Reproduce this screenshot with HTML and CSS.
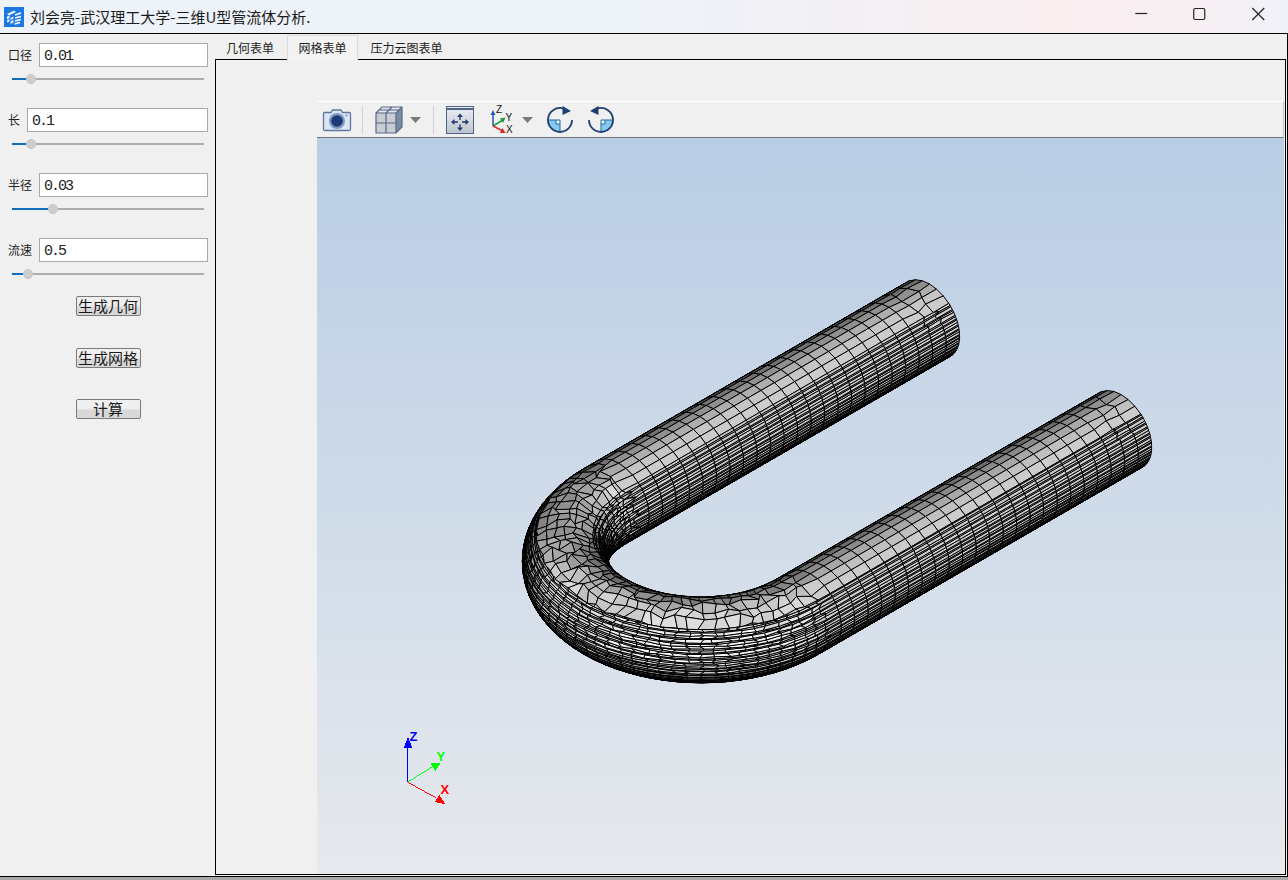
FILE: index.html
```html
<!DOCTYPE html>
<html lang="zh-CN">
<head>
<meta charset="utf-8">
<title>刘会亮-武汉理工大学-三维U型管流体分析.</title>
<link rel="stylesheet" href="styles.css">
</head>
<body>
<header class="titlebar">
  <svg class="app-icon" viewBox="0 0 20 20" aria-hidden="true">
    <rect width="20" height="20" fill="#1a78e0"/>
    <path d="M3 7L10 3.500L12 5L5 8.500Z M3 9.500L5.500 8.500V11L3 12.500Z M3 13.500L5.500 12V14.500L3 15.500Z M6.500 11L9.500 9.500V11.500L6.500 13Z M6.500 14.500L9.500 13V15.500L6.500 17Z" fill="#e8f3ff"/>
    <path d="M11 8L17 6M11 11L17 9.500M11 14L17 12.500M10.500 17L16 15.500" stroke="#fff" stroke-width="1.500"/>
  </svg>
  <div class="app-title">刘会亮-武汉理工大学-三维U型管流体分析.</div>
  <div class="win-controls">
    <svg class="win-btn" viewBox="0 0 58 33" aria-hidden="true"><path d="M23 13.500H35" class="win-glyph"/></svg>
    <svg class="win-btn" viewBox="0 0 58 33" aria-hidden="true"><rect x="23.500" y="8.500" width="11" height="11" rx="1.500" class="win-glyph"/></svg>
    <svg class="win-btn" viewBox="0 0 58 33" aria-hidden="true"><path d="M23 8L35 20M35 8L23 20" class="win-glyph"/></svg>
  </div>
</header>

<main class="workspace">
  <aside class="sidebar">
    <section class="field">
      <div class="field-row"><span class="field-label">口径</span><div class="text-input">0.01</div></div>
      <div class="slider"><i class="slider-fill" style="width:14px"></i><i class="slider-thumb"></i><i class="slider-track"></i></div>
    </section>
    <section class="field">
      <div class="field-row"><span class="field-label">长</span><div class="text-input">0.1</div></div>
      <div class="slider"><i class="slider-fill" style="width:14px"></i><i class="slider-thumb"></i><i class="slider-track"></i></div>
    </section>
    <section class="field">
      <div class="field-row"><span class="field-label">半径</span><div class="text-input">0.03</div></div>
      <div class="slider"><i class="slider-fill" style="width:36px"></i><i class="slider-thumb"></i><i class="slider-track"></i></div>
    </section>
    <section class="field">
      <div class="field-row"><span class="field-label">流速</span><div class="text-input">0.5</div></div>
      <div class="slider"><i class="slider-fill" style="width:11px"></i><i class="slider-thumb"></i><i class="slider-track"></i></div>
    </section>
    <div class="actions">
      <button class="action">生成几何</button>
      <button class="action">生成网格</button>
      <button class="action">计算</button>
    </div>
  </aside>

  <div class="tabs-area">
    <nav class="tabs">
      <span class="tab">几何表单</span>
      <span class="tab tab-active">网格表单</span>
      <span class="tab">压力云图表单</span>
    </nav>
    <div class="pane">
      <div class="toolbar">
        <svg class="tool camera" viewBox="0 0 30 24" aria-hidden="true">
          <path d="M2.500 4.500H9L10.500 2H19L20.500 4.500H27Q28.500 4.500 28.500 6V21Q28.500 22.500 27 22.500H3Q1.500 22.500 1.500 21V6Q1.500 4.500 2.500 4.500Z" fill="#dbe6f4" stroke="#5d779e" stroke-width="1.300"/>
          <circle cx="15" cy="13" r="8" fill="#7e98c0"/>
          <circle cx="15" cy="13" r="5.800" fill="#1c3a78"/>
          <circle cx="24.500" cy="7.500" r="1" fill="#6d86ad"/>
        </svg>
        <i class="tool-sep sep-one"></i>
        <svg class="tool cube" viewBox="0 0 28 28" aria-hidden="true">
          <path d="M1 7L7 1H27V21L21 27H1Z" fill="#c9cdd3"/>
          <path d="M21 7L27 1V21L21 27Z" fill="#7b8ba3"/>
          <path d="M1 7L7 1H27L21 7Z" fill="#e3e6ea"/>
          <path d="M1 7L7 1H27V21L21 27H1ZM1 7H21V27M21 7L27 1M11 7V27M1 17H21M11 7L17 1M4 4H24" fill="none" stroke="#566a88" stroke-width="1.200"/>
        </svg>
        <svg class="tool caret caret-one" viewBox="0 0 11 6" aria-hidden="true"><path d="M0 0H11L5.500 6Z" fill="#7a7a7a"/></svg>
        <i class="tool-sep sep-two"></i>
        <svg class="tool fit" viewBox="0 0 28 28" aria-hidden="true">
          <defs><linearGradient id="fitg" x1="0" y1="0" x2="0" y2="1"><stop offset="0" stop-color="#eef0f3"/><stop offset="1" stop-color="#bcc3ce"/></linearGradient></defs>
          <rect x=".5" y=".5" width="27" height="27" fill="url(#fitg)" stroke="#4e6488"/>
          <path d="M1 3H27" stroke="#4e6488" stroke-width="2"/>
          <path d="M14 7.500L11 11H13.300V14H14.700V11H17ZM14 25L11 21.500H13.300V18.500H14.700V21.500H17ZM5 16L8.500 13V15.300H12V16.700H8.500V19ZM23 16L19.500 13V15.300H16V16.700H19.500V19Z" fill="#1f3d73"/>
        </svg>
        <svg class="tool axes" viewBox="0 0 30 30" aria-hidden="true">
          <path d="M4 21V9" stroke="#2257b8" stroke-width="1.500"/><path d="M4 5L1.500 10H6.500Z" fill="#2257b8"/>
          <path d="M4 21L13 15.500" stroke="#1f9a3a" stroke-width="1.500"/><path d="M16.500 12.500L11 13.500L14 18Z" fill="#1f9a3a"/>
          <path d="M4 21L13 25.500" stroke="#d82828" stroke-width="1.500"/><path d="M16.500 28L11 28L13.500 23Z" fill="#d82828"/>
          <text x="7" y="8" class="axes-label">Z</text><text x="16.500" y="15.500" class="axes-label">Y</text><text x="17" y="27.500" class="axes-label">X</text>
        </svg>
        <svg class="tool caret caret-two" viewBox="0 0 11 6" aria-hidden="true"><path d="M0 0H11L5.500 6Z" fill="#7a7a7a"/></svg>
        <svg class="tool rotate rot-one" viewBox="0 0 28 28" aria-hidden="true">
          <g>
            <path d="M2 14H14V26A12 12 0 0 1 2 14Z" fill="#86c8ef"/>
            <path d="M10 14H14V18H10Z" fill="#eef7fc"/>
            <path d="M2 14H14V26M10 14V18H14" stroke="#1c6da8" stroke-width="1" fill="none"/>
            <path d="M2 14A12 12 0 0 1 18 2.700" fill="none" stroke="#1f3f70" stroke-width="1.800"/>
            <path d="M26 14A12 12 0 0 1 2 14" fill="none" stroke="#1f3f70" stroke-width="1.800"/>
            <path d="M25 5L16.500 0L16.500 9Z" fill="#1f3f70"/>
          </g>
        </svg>
        <svg class="tool rotate rot-two" viewBox="0 0 28 28" aria-hidden="true">
          <g transform="matrix(-1 0 0 1 28 0)">
            <path d="M2 14H14V26A12 12 0 0 1 2 14Z" fill="#86c8ef"/>
            <path d="M10 14H14V18H10Z" fill="#eef7fc"/>
            <path d="M2 14H14V26M10 14V18H14" stroke="#1c6da8" stroke-width="1" fill="none"/>
            <path d="M2 14A12 12 0 0 1 18 2.700" fill="none" stroke="#1f3f70" stroke-width="1.800"/>
            <path d="M26 14A12 12 0 0 1 2 14" fill="none" stroke="#1f3f70" stroke-width="1.800"/>
            <path d="M25 5L16.500 0L16.500 9Z" fill="#1f3f70"/>
          </g>
        </svg>
      </div>
      <div class="viewport">
        <svg id="scene" class="scene" viewBox="317 138 967 737" aria-label="U型管网格">
          <g id="mesh"></g>
          <g class="triad">
            <path d="M407 783V747" stroke="#0000ff"/>
            <path d="M407.500 738L403 749H412Z" fill="#0000ff"/>
            <text x="409" y="742" class="triad-label triad-z">Z</text>
            <path d="M407 783L433 767" stroke="#00ff00"/>
            <path d="M440 764L430 764L435 772Z" fill="#00ff00"/>
            <text x="436" y="762" class="triad-label triad-y">Y</text>
            <path d="M407 783L436 799" stroke="#ff0000"/>
            <path d="M445 805L439 796L434 803Z" fill="#ff0000"/>
            <text x="440" y="795" class="triad-label triad-x">X</text>
          </g>
        </svg>
      </div>
    </div>
  </div>
</main>
<footer class="window-edge"></footer>
<script src="mesh.js"></script>
</body>
</html>
```
FILE: styles.css
```css
* { box-sizing: border-box; }
html, body { margin: 0; padding: 0; }
body {
  width: 1288px;
  height: 880px;
  display: flex;
  flex-direction: column;
  overflow: hidden;
  background: #f0f0f0;
  font-family: "Noto Sans CJK SC", "Noto Sans", sans-serif;
  color: #111;
}
.titlebar {
  height: 34px;
  flex: none;
  display: flex;
  align-items: center;
  padding-left: 4px;
  border-bottom: 1px solid #000;
  background: linear-gradient(90deg, #eef3f9 0%, #eef2f9 50%, #f3f0f5 66%, #faeef0 82%, #f8eff3 92%, #f0f2f9 100%);
}
.app-icon { width: 20px; height: 20px; flex: none; }
.app-title { margin-left: 6px; font-size: 15px; line-height: 28px; color: #1a1a1a; white-space: nowrap; }
.win-controls { margin-left: auto; display: flex; padding-right: 1px; gap: 0; }
.win-btn { width: 58.500px; height: 33px; display: block; }
.win-glyph { fill: none; stroke: #222; stroke-width: 1.200; }

.workspace { flex: 1; min-height: 0; display: flex; border-right: 1px solid #000; }

.sidebar { width: 215px; flex: none; padding-top: 9px; display: flex; flex-direction: column; gap: 23px; }
.field { display: flex; flex-direction: column; }
.field-row { height: 24px; display: flex; align-items: center; padding: 0 7px 0 8px; gap: 7px; }
.field-label { font-size: 12px; line-height: 14px; white-space: nowrap; color: #222; }
.text-input {
  flex: 1;
  height: 24px;
  min-width: 0;
  background: #fff;
  border: 1px solid #a9a9a9;
  padding-left: 4px;
  font: 15px/25px "Liberation Mono", monospace;
  letter-spacing: -2px;
  color: #222;
}
.slider { height: 12px; margin: 6px 11px 0 12px; display: flex; align-items: center; }
.slider-fill { height: 2px; background: #0f6cbd; display: block; flex: none; }
.slider-thumb { width: 10px; height: 10px; border-radius: 50%; background: #cdcdcd; border: 1px solid #c4c4c4; display: block; flex: none; }
.slider-track { flex: 1; height: 2px; background: #adadad; display: block; }

.actions { margin-top: -7px; display: flex; flex-direction: column; align-items: center; gap: 31.500px; padding-left: 1px; }
.action {
  width: 65px;
  height: 20px;
  padding: 0;
  border: 1px solid #7a7a7a;
  border-radius: 2px;
  background: linear-gradient(180deg, #efefef 0%, #efefef 50%, #d8d8d8 55%, #d8d8d8 100%);
  font-family: "Noto Sans CJK SC", sans-serif;
  font-size: 15px;
  line-height: 18px;
  font-weight: 400;
  color: #1a1a1a;
}

.tabs-area { flex: 1; min-width: 0; display: flex; flex-direction: column; margin: 0 1px 1px 0; }
.tabs { height: 25px; flex: none; display: flex; position: relative; z-index: 1; align-items: flex-end; }
.tab { height: 26px; width: 70px; margin-right: 2px; font-size: 12px; line-height: 28px; text-align: center; color: #222; margin-bottom: -1px; white-space: nowrap; }
.tab-active { height: 25px; line-height: 24px; width: 71px; margin-right: 0; background: #f3f3f3; border: 1px solid #dcdcdc; border-bottom: 0; }
.tab:nth-child(3) { width: 97px; margin-right: 0; }
.pane {
  flex: 1;
  min-height: 0;
  display: flex;
  flex-direction: column;
  border: 1px solid #000;
  padding: 41px 1px 0 101px;
  background: #f0f0f0;
}
.toolbar {
  height: 37px;
  flex: none;
  display: flex;
  align-items: center;
  padding-left: 5px;
  border-top: 1px solid #fff;
  border-bottom: 1px solid #70757c;
  border-right: 1px solid #c4c4c4;
  background: #f0f0f0;
}
.tool { display: block; flex: none; }
.camera { width: 30px; height: 24px; }
.tool-sep { display: block; width: 1px; height: 28px; background: #d2d2d2; flex: none; }
.sep-one { margin-left: 10px; }
.sep-two { margin-left: 12px; }
.cube { width: 28px; height: 28px; margin-left: 12px; }
.caret { width: 11px; height: 6px; }
.caret-one { margin-left: 7px; }
.fit { width: 28px; height: 28px; margin-left: 12px; }
.axes { width: 30px; height: 30px; margin-left: 15px; }
.caret-two { margin-left: 3px; }
.rotate { width: 28px; height: 28px; }
.rot-one { margin-left: 13px; }
.rot-two { margin-left: 13px; }
.axes-label { font: 10px "Liberation Sans", sans-serif; fill: #111; }

.viewport {
  flex: 1;
  min-height: 0;
  background: linear-gradient(180deg, #b9cde5 0%, #e6e9ed 100%);
}
.scene { display: block; width: 100%; height: 100%; shape-rendering: crispEdges; }
.triad path { shape-rendering: crispEdges; stroke-width: 1; }
.triad-label { font: bold 13px "Liberation Sans", sans-serif; }
.triad-z { fill: #0000ff; }
.triad-y { fill: #00ff00; }
.triad-x { fill: #ff0000; }

.window-edge { height: 4px; flex: none; border-top: 1px solid #000; background: #a8a8a8; }
```
FILE: mesh.js
```js
(function () {
  var ox = 701, oy = 562;
  var R = 43, Rb = 136, L = 459;
  var ax = [0.7071, 0.4082], ay = [0.7071, -0.4082], az = [0, -0.8165];
  var view = [0.57735, -0.57735, 0.57735];
  var light = [-0.031, 0.248, 0.963];
  var seed = 12345;
  function rnd() { seed = (seed * 16807) % 2147483647; return seed / 2147483647; }

  // circumferential grid: sparse in 50..130 deg, dense elsewhere
  var phis = [];
  var p = 50;
  while (p < 130) { phis.push(p); p += 13.5; }
  p = 130;
  var pattern = [3.6, 1.8, 4.2, 1.6, 2.8, 4.2, 1.8, 3.2, 1.6, 3.6];
  var k = 0;
  while (p < 410) { phis.push(p); p += pattern[k % pattern.length]; k++; }
  var nj = phis.length;
  phis.push(410);

  // stations along the path, tube 1 end -> bend -> tube 2 end
  var straightN = 24, bendN = 40;
  var stations = [];
  var i, j;
  for (i = 0; i <= straightN; i++) stations.push({ kind: 1, y: L * (1 - i / straightN) });
  for (i = 1; i < bendN; i++) stations.push({ kind: 0, th: Math.PI * (1 - i / bendN) });
  for (i = 0; i <= straightN; i++) stations.push({ kind: 2, y: L * i / straightN });
  var ni = stations.length;

  function frame(st) {
    if (st.kind === 1) return { c: [-Rb, st.y, 0], n: [-1, 0, 0] };
    if (st.kind === 2) return { c: [Rb, st.y, 0], n: [1, 0, 0] };
    var c = Math.cos(st.th), s = Math.sin(st.th);
    return { c: [Rb * c, -Rb * s, 0], n: [c, -s, 0] };
  }
  function jitterAmount(ii) {
    if (ii === 0 || ii === ni - 1) return 0;
    if (ii > straightN - 1 && ii < straightN + bendN + 1) return 1;
    if (ii < 3 || ii > ni - 4) return 0.5;
    return 0;
  }
  var verts = [];
  for (i = 0; i < ni; i++) {
    verts.push([]);
    var jit = jitterAmount(i);
    for (j = 0; j < nj; j++) {
      var deg = phis[j];
      var c0 = Math.cos(deg * Math.PI / 180);
      var s0 = Math.sin(deg * Math.PI / 180);
      // the underside of the bend keeps ruled lines; the upper side is irregular
      var regular = s0 < -0.35 ? 0.15 : (c0 > 0.55 ? 0.6 : 1);
      if (jit === 0.5 && s0 < 0.5) regular = 0;
      var dphi = (phis[j + 1] - phis[j]) * 0.42 * jit * regular * (rnd() * 2 - 1);
      var ds = 0.48 * jit * regular * (rnd() * 2 - 1);
      var st = stations[i];
      var st2 = stations[Math.min(ni - 1, Math.max(0, i + (ds > 0 ? 1 : -1)))];
      var f = frame(st), g = frame(st2), w = Math.abs(ds);
      var cx = f.c[0] + (g.c[0] - f.c[0]) * w, cy = f.c[1] + (g.c[1] - f.c[1]) * w;
      var nx = f.n[0] + (g.n[0] - f.n[0]) * w, ny = f.n[1] + (g.n[1] - f.n[1]) * w;
      var nl = Math.hypot(nx, ny); nx /= nl; ny /= nl;
      var ph = (deg + dphi) * Math.PI / 180;
      var cp = Math.cos(ph), sp = Math.sin(ph);
      verts[i].push({
        p: [cx + R * cp * nx, cy + R * cp * ny, R * sp],
        n: [cp * nx, cp * ny, sp]
      });
    }
  }
  function project(v) {
    return [
      ox + ax[0] * v[0] + ay[0] * v[1] + az[0] * v[2],
      oy + ax[1] * v[0] + ay[1] * v[1] + az[1] * v[2]
    ];
  }
  function toScreen(n) {
    return [
      ax[0] * n[0] + ay[0] * n[1] + az[0] * n[2],
      ax[1] * n[0] + ay[1] * n[1] + az[1] * n[2],
      view[0] * n[0] + view[1] * n[1] + view[2] * n[2]
    ];
  }
  var quads = [];
  for (i = 0; i < ni - 1; i++) {
    for (j = 0; j < nj; j++) {
      var j2 = (j + 1) % nj;
      var q = [verts[i][j], verts[i + 1][j], verts[i + 1][j2], verts[i][j2]];
      var n = [0, 0, 0], ctr = [0, 0, 0], a, b;
      for (a = 0; a < 4; a++) for (b = 0; b < 3; b++) { n[b] += q[a].n[b]; ctr[b] += q[a].p[b]; }
      var len = Math.hypot(n[0], n[1], n[2]);
      for (b = 0; b < 3; b++) { n[b] /= len; ctr[b] /= 4; }
      var sn = toScreen(n);
      if (sn[2] < -0.12) continue;
      var d = sn[0] * light[0] + sn[1] * light[1] + sn[2] * light[2];
      var gray = d > 0.7 ? 205 + (d - 0.7) * 165 : (d > 0.6 ? 205 : 205 - (0.6 - d) * 195);
      if (jitterAmount(i) === 1) gray += (rnd() - 0.5) * 30;
      gray = Math.round(Math.max(60, Math.min(254, gray)) / 6) * 6;
      var depth = ctr[0] * view[0] + ctr[1] * view[1] + ctr[2] * view[2];
      var pts = q.map(function (v) {
        var s = project(v.p);
        return s[0].toFixed(1) + ',' + s[1].toFixed(1);
      }).join(' ');
      quads.push({ depth: depth, gray: Math.min(255, gray), pts: pts });
    }
  }
  quads.sort(function (x, y) { return x.depth - y.depth; });
  var NS = 'http://www.w3.org/2000/svg';
  var host = document.getElementById('mesh');
  quads.forEach(function (q) {
    var el = document.createElementNS(NS, 'polygon');
    el.setAttribute('points', q.pts);
    el.setAttribute('fill', 'rgb(' + q.gray + ',' + q.gray + ',' + q.gray + ')');
    el.setAttribute('stroke', '#000');
    el.setAttribute('stroke-width', '1');
    el.setAttribute('stroke-linejoin', 'bevel');
    host.appendChild(el);
  });
})();
```
